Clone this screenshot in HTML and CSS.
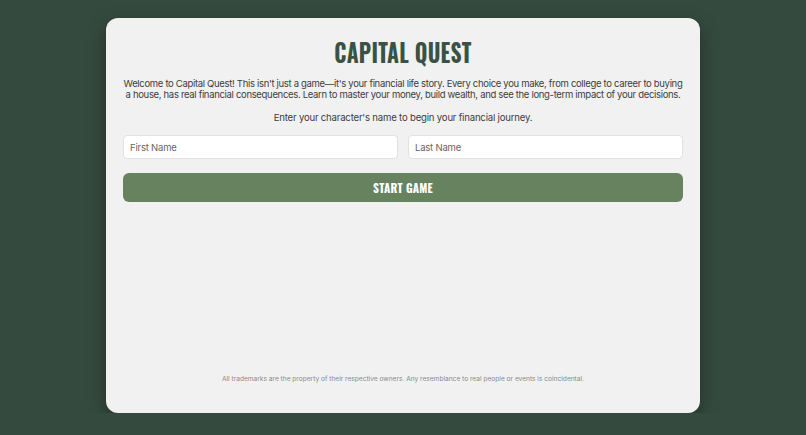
FILE: index.html
```html
<!DOCTYPE html>
<html lang="en">
<head>
    <meta charset="UTF-8">
    <title>Capital Quest</title>
    <link rel="stylesheet" href="styles.css">
</head>
<body>
<div class="card">
    <h1 class="title">CAPITAL QUEST</h1>
    <p class="intro">Welcome to Capital Quest! This isn't just a game—it's your financial life story. Every choice you make, from college to career to buying a house, has real financial consequences. Learn to master your money, build wealth, and see the long-term impact of your decisions.</p>
    <p class="prompt">Enter your character's name to begin your financial journey.</p>
    <div class="names">
        <input type="text" placeholder="First Name">
        <input type="text" placeholder="Last Name">
    </div>
    <button class="start">START GAME</button>
    <p class="legal">All trademarks are the property of their respective owners. Any resemblance to real people or events is coincidental.</p>
</div>
</body>
</html>
```

FILE: styles.css
```css
*{
    margin:0;
    padding:0;
    box-sizing: border-box;
}

body{
    background: #354a3e;
    font-family: Inter, "Noto Sans", sans-serif;
    padding-top: 18px;
}

.card{
    width: 594px;
    height: 395px;
    margin: 0 auto;
    background: #f1f1f1;
    border-radius: 12px;
    box-shadow: 0 6px 18px rgba(0, 0, 0, 0.35);
    padding: 20px 17px 30px;
    display: flex;
    flex-direction: column;
}

.title{
    font-family: Oswald, "Liberation Sans Narrow", "DejaVu Sans Condensed", sans-serif;
    font-weight: 700;
    font-size: 26px;
    line-height: 28px;
    text-align: center;
    color: #3a5244;
    transform: scaleX(0.83);
    letter-spacing: 0.3px;
}

.intro{
    margin-top: 12px;
    font-size: 9.5px;
    line-height: 11px;
    letter-spacing: -0.32px;
    text-align: center;
    color: #3d3d3d;
}

.prompt{
    margin-top: 12px;
    font-size: 9.6px;
    line-height: 12px;
    letter-spacing: -0.2px;
    text-align: center;
    color: #3d3d3d;
}

.names{
    display: flex;
    gap: 10px;
    margin-top: 11px;
}
.names input{
    flex: 1;
    height: 24px;
    border: 1px solid #e2e2e2;
    border-radius: 4px;
    background: #fff;
    padding: 0 6px;
    font-family: inherit;
    font-size: 9.5px;
    letter-spacing: -0.2px;
    color: #333;
}
.names input::placeholder{
    color: #666;
}

.start{
    margin-top: 14px;
    height: 29px;
    border: 0;
    border-radius: 6px;
    background: #66825f;
    color: #fff;
    font-family: Oswald, "Liberation Sans Narrow", "DejaVu Sans Condensed", sans-serif;
    font-weight: 700;
    font-size: 11.5px;
    letter-spacing: 0.2px;
}

.legal{
    margin-top: auto;
    font-size: 6.6px;
    text-align: center;
    color: #8a8a8a;
}
```
